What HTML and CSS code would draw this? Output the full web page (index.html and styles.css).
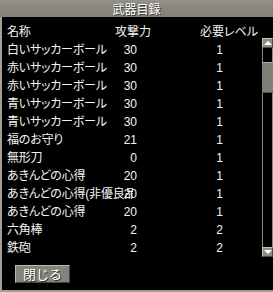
FILE: index.html
```html
<!DOCTYPE html>
<html lang="ja">
<head>
<meta charset="utf-8">
<link rel="stylesheet" href="styles.css">
</head>
<body>
<div class="window">
  <div class="titlebar"><span class="title">武器目録</span></div>
  <div class="content">
    <div class="main">
      <div class="list">
        <div class="row head"><span class="name">名称</span><span class="atk">攻撃力</span><span class="lvl">必要レベル</span></div>
        <div class="row"><span class="name">白いサッカーボール</span><span class="atk">30</span><span class="lvl">1</span></div>
        <div class="row"><span class="name">赤いサッカーボール</span><span class="atk">30</span><span class="lvl">1</span></div>
        <div class="row"><span class="name">赤いサッカーボール</span><span class="atk">30</span><span class="lvl">1</span></div>
        <div class="row"><span class="name">青いサッカーボール</span><span class="atk">30</span><span class="lvl">1</span></div>
        <div class="row"><span class="name">青いサッカーボール</span><span class="atk">30</span><span class="lvl">1</span></div>
        <div class="row"><span class="name">福のお守り</span><span class="atk">21</span><span class="lvl">1</span></div>
        <div class="row"><span class="name">無形刀</span><span class="atk">0</span><span class="lvl">1</span></div>
        <div class="row"><span class="name">あきんどの心得</span><span class="atk">20</span><span class="lvl">1</span></div>
        <div class="row"><span class="name">あきんどの心得(非優良品)</span><span class="atk">20</span><span class="lvl">1</span></div>
        <div class="row"><span class="name">あきんどの心得</span><span class="atk">20</span><span class="lvl">1</span></div>
        <div class="row"><span class="name">六角棒</span><span class="atk">2</span><span class="lvl">2</span></div>
        <div class="row"><span class="name">鉄砲</span><span class="atk">2</span><span class="lvl">2</span></div>
      </div>
      <div class="scrollbar">
        <div class="sbtn up"></div>
        <div class="track"><div class="thumb"></div></div>
        <div class="sbtn down"></div>
      </div>
    </div>
    <div class="footer"><button class="close">閉じる</button></div>
  </div>
</div>
</body>
</html>
```
FILE: styles.css
```css
html, body {
  margin: 0;
  padding: 0;
  background: #000;
}
body {
  font-family: "Liberation Sans", "Noto Sans CJK JP", sans-serif;
  color: #f4f4f4;
  font-size: 12px;
}
.window {
  width: 271px;
  height: 290px;
  border-left: 2px solid #a19f97;
  border-bottom: 2px solid #a19f97;
  display: flex;
  flex-direction: column;
}
.titlebar {
  height: 17px;
  background: #8b8980;
  background-image: linear-gradient(180deg, #939188 0%, #878579 60%, #84827a 100%);
  display: flex;
  justify-content: center;
  align-items: center;
  margin-left: -2px;
}
.title {
  font-family: "Noto Sans CJK JP", sans-serif;
  font-size: 12px;
  color: #fff;
  text-shadow: 1px 1px 0 #3a3a34;
  line-height: 17px;
}
.content {
  flex: 1;
  background: #000;
  display: flex;
  flex-direction: column;
  padding-top: 6px;
}
.main {
  display: flex;
}
.list {
  width: 260px;
  padding-left: 5px;
}
.row {
  display: grid;
  grid-template-columns: 108px 22px 86px;
  height: 18px;
  line-height: 18px;
  white-space: nowrap;
  font-feature-settings: "palt";
}
.name {
  display: block;
  width: 126px;
  overflow: hidden;
  letter-spacing: -0.2px;
}
.atk {
  text-align: right;
  position: relative;
}
.lvl {
  text-align: right;
}
.head .atk, .head .lvl {
  text-align: left;
}
.head .lvl {
  padding-left: 63px;
}
.scrollbar {
  margin-top: 15px;
  width: 11px;
  height: 219px;
  display: flex;
  flex-direction: column;
}
.sbtn {
  height: 10px;
  background: #8d8b82;
  border-top: 1px solid #c4c2ba;
  border-left: 1px solid #c4c2ba;
  border-bottom: 1px solid #4d4b45;
  border-right: 1px solid #4d4b45;
  box-sizing: border-box;
  display: flex;
  justify-content: center;
  align-items: center;
}
.sbtn.up::before {
  content: "";
  border-left: 4px solid transparent;
  border-right: 4px solid transparent;
  border-bottom: 4px solid #fff;
}
.sbtn.down::before {
  content: "";
  border-left: 4px solid transparent;
  border-right: 4px solid transparent;
  border-top: 4px solid #fff;
}
.track {
  flex: 1;
  border-left: 1px solid #8a887f;
  border-right: 1px solid #8a887f;
  padding-top: 14px;
}
.thumb {
  height: 29px;
  background: #7f7d75;
  border-top: 1px solid #b0aea5;
  border-bottom: 1px solid #55534d;
  margin: 0 -1px;
}
.footer {
  padding-left: 11px;
  margin-top: 8px;
}
.close {
  width: 55px;
  height: 18px;
  padding: 0;
  margin-left: 2px;
  font-family: "Noto Sans CJK JP", sans-serif;
  font-size: 13px;
  color: #fff;
  text-shadow: 1px 1px 0 #333;
  background: #85837a;
  border-top: 1px solid #b9b7ae;
  border-left: 1px solid #b9b7ae;
  border-bottom: 1px solid #45443f;
  border-right: 1px solid #45443f;
  line-height: 16px;
}
```
